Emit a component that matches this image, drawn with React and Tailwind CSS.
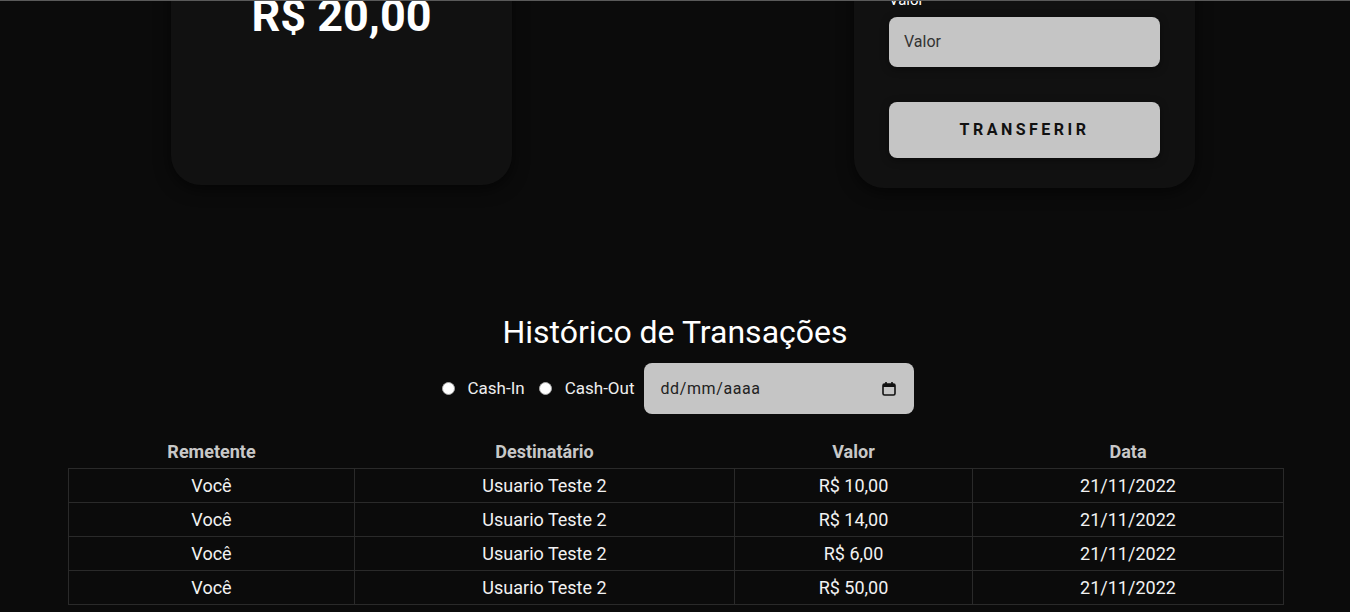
import React from "react";

const rows = [
  ["Você", "Usuario Teste 2", "R$ 10,00", "21/11/2022"],
  ["Você", "Usuario Teste 2", "R$ 14,00", "21/11/2022"],
  ["Você", "Usuario Teste 2", "R$ 6,00", "21/11/2022"],
  ["Você", "Usuario Teste 2", "R$ 50,00", "21/11/2022"],
];

function CalendarIcon() {
  return (
    <svg width="14" height="15" viewBox="0 0 14 15" fill="none">
      <rect x="1" y="3" width="12" height="11" rx="1.5" stroke="#111" strokeWidth="1.6" />
      <rect x="1" y="3" width="12" height="3" fill="#111" />
      <rect x="3.2" y="1" width="1.6" height="3" fill="#111" />
      <rect x="9.2" y="1" width="1.6" height="3" fill="#111" />
    </svg>
  );
}

export default function App() {
  return (
    <div
      className="h-[612px] w-[1350px] overflow-hidden bg-[#0b0b0b] border-t border-[#5a5a5a] text-white"
      style={{ fontFamily: "Roboto, 'Noto Sans', sans-serif" }}
    >
      <div className="flex flex-col -mt-[116px]">
        {/* top cards */}
        <div className="flex items-start pl-[171px] gap-[342px]">
          <div className="w-[341px] h-[300px] bg-[#111111] rounded-[30px] shadow-[0_4px_16px_rgba(0,0,0,0.6)] flex flex-col items-center pt-[105px]">
            <div className="text-[45px] font-bold leading-[52px] text-white">R$ 20,00</div>
          </div>
          <div className="w-[341px] h-[303px] bg-[#111111] rounded-[30px] shadow-[0_4px_16px_rgba(0,0,0,0.6)] flex flex-col justify-end px-[35px] pb-[30px]">
            <label className="text-[15px] leading-[22px] text-white mb-[6px]">Valor</label>
            <div className="h-[50px] rounded-[8px] bg-[#c5c5c5] flex items-center px-[15px] text-[16px] text-[#333] shadow-[0_2px_8px_rgba(0,0,0,0.4)]">
              Valor
            </div>
            <button className="mt-[35px] h-[56px] rounded-[8px] bg-[#c5c5c5] text-[#111] font-bold text-[16px] tracking-[3.5px] shadow-[0_2px_8px_rgba(0,0,0,0.4)]">
              TRANSFERIR
            </button>
          </div>
        </div>

        {/* history */}
        <h2 className="mt-[124px] text-center text-[32px] leading-[40px] font-normal text-white">
          Histórico de Transações
        </h2>
        <div className="mt-[11px] flex items-center justify-center h-[51px] pl-[6px]">
          <span className="w-[13px] h-[13px] rounded-full bg-white border border-[#aaa]" />
          <span className="ml-[13px] text-[17px] text-[#eee]">Cash-In</span>
          <span className="ml-[14px] w-[13px] h-[13px] rounded-full bg-white border border-[#aaa]" />
          <span className="ml-[13px] text-[17px] text-[#eee]">Cash-Out</span>
          <div className="ml-[10px] w-[270px] h-[51px] rounded-[8px] bg-[#c5c5c5] flex items-center justify-between pl-[16px] pr-[18px] text-[16px] text-[#222]">
            <span className="tracking-[0.6px]">dd/mm/aaaa</span>
            <CalendarIcon />
          </div>
        </div>

        <table className="mt-[22px] ml-[68px] w-[1215px] border-collapse table-fixed">
          <colgroup>
            <col className="w-[286px]" />
            <col className="w-[380px]" />
            <col className="w-[238px]" />
            <col className="w-[311px]" />
          </colgroup>
          <thead>
            <tr className="h-[32px]">
              {["Remetente", "Destinatário", "Valor", "Data"].map((h) => (
                <th key={h} className="p-0 text-center text-[18px] font-bold text-[#c8c8c8]">
                  {h}
                </th>
              ))}
            </tr>
          </thead>
          <tbody>
            {rows.map((r, i) => (
              <tr key={i} className="h-[34px]">
                {r.map((c, j) => (
                  <td
                    key={j}
                    className="p-0 border border-[#2a2a2a] text-center text-[18px] text-[#f2f2f2]"
                  >
                    {c}
                  </td>
                ))}
              </tr>
            ))}
          </tbody>
        </table>
      </div>
    </div>
  );
}
